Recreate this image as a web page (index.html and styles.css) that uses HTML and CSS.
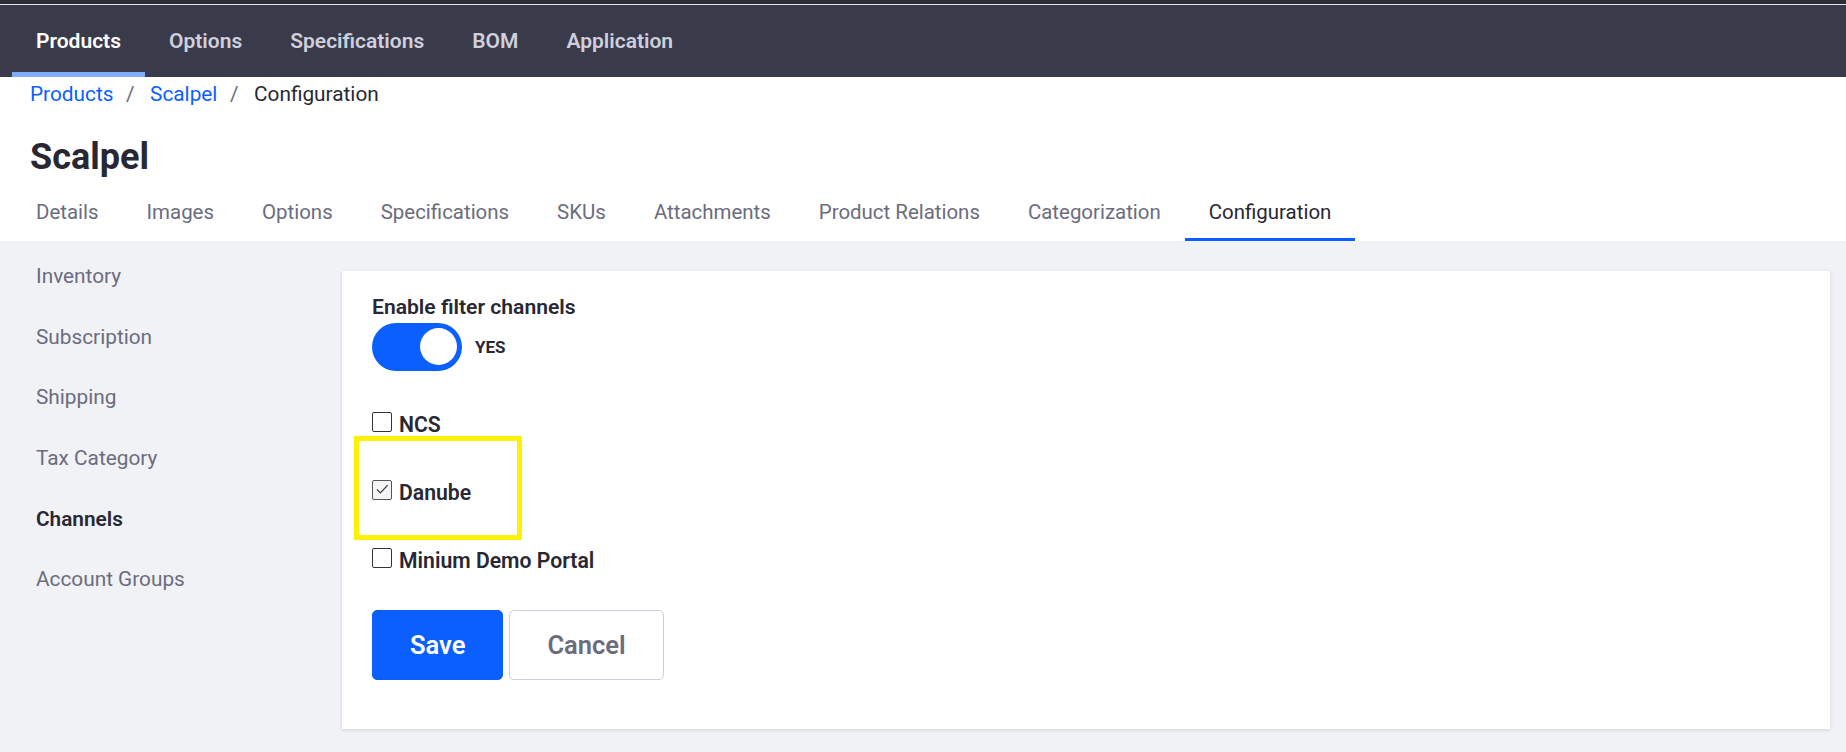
FILE: index.html
```html
<!DOCTYPE html>
<html lang="en">
<head>
<meta charset="utf-8">
<title>Scalpel - Configuration</title>
<link rel="stylesheet" href="styles.css">
</head>
<body>
<div class="topstrip"></div>
<nav class="appnav">
  <a class="appnav-item active">Products</a>
  <a class="appnav-item">Options</a>
  <a class="appnav-item">Specifications</a>
  <a class="appnav-item">BOM</a>
  <a class="appnav-item">Application</a>
</nav>
<header class="page-header">
  <ol class="breadcrumb">
    <li class="crumb-link">Products</li>
    <li class="crumb-sep">/</li>
    <li class="crumb-link">Scalpel</li>
    <li class="crumb-sep">/</li>
    <li class="crumb-current">Configuration</li>
  </ol>
  <h1 class="title">Scalpel</h1>
  <div class="tabs">
    <a class="tab">Details</a>
    <a class="tab">Images</a>
    <a class="tab">Options</a>
    <a class="tab">Specifications</a>
    <a class="tab">SKUs</a>
    <a class="tab">Attachments</a>
    <a class="tab">Product Relations</a>
    <a class="tab">Categorization</a>
    <a class="tab active">Configuration</a>
  </div>
</header>
<main class="content">
  <aside class="sidenav">
    <a class="side-item">Inventory</a>
    <a class="side-item">Subscription</a>
    <a class="side-item">Shipping</a>
    <a class="side-item">Tax Category</a>
    <a class="side-item active">Channels</a>
    <a class="side-item">Account Groups</a>
  </aside>
  <section class="card">
    <div class="field-label">Enable filter channels</div>
    <div class="toggle-row">
      <span class="toggle"><span class="knob"></span></span>
      <span class="toggle-text">YES</span>
    </div>
    <div class="check-row first">
      <span class="box"></span>
      <span class="check-label">NCS</span>
    </div>
    <div class="check-row">
      <span class="box checked"><svg viewBox="0 0 20 20" width="17" height="17"><polyline points="3.5,10 7.5,14 16,5" fill="none" stroke="#3a3a3a" stroke-width="1.3"/></svg></span>
      <span class="check-label">Danube</span>
    </div>
    <div class="check-row">
      <span class="box"></span>
      <span class="check-label">Minium Demo Portal</span>
    </div>
    <div class="actions">
      <button class="btn btn-primary">Save</button>
      <button class="btn btn-secondary">Cancel</button>
    </div>
    <div class="highlight"></div>
  </section>
</main>
</body>
</html>
```

FILE: styles.css
```css
* { box-sizing: border-box; margin: 0; padding: 0; }
body {
  margin: 0;
  width: 1846px;
  height: 752px;
  overflow: hidden;
  font-family: Roboto, "Noto Sans", sans-serif;
  background: #f1f2f5;
  color: #272833;
}
.topstrip { height: 5px; background: #2c2d38; border-bottom: 1px solid #e6e6ee; }
.appnav { display: flex; height: 72px; background: #393a4a; padding-left: 12px; }
.appnav-item {
  display: flex; align-items: center;
  padding: 5px 24px 0;
  border-bottom: 5px solid transparent;
  font-size: 21px; font-weight: 600;
  color: #cfd0db;
}
.appnav-item.active { color: #ffffff; border-bottom-color: #80acff; }

.page-header { background: #ffffff; }
.breadcrumb { display: flex; list-style: none; padding: 3px 30px 0; font-size: 20.8px; line-height: 28px; }
.crumb-link { color: #0b5fff; }
.crumb-sep { color: #6b6c7e; padding: 0 15.5px 0 12.5px; }
.crumb-current { color: #272833; }
.title { margin-top: 27px; padding-left: 30px; font-size: 36px; line-height: 44px; font-weight: 700; color: #272833; }
.tabs { display: flex; padding-left: 12px; }
.tab {
  padding: 19px 24px 12px;
  line-height: 28px; font-size: 20.45px;
  color: #6b6c7e;
  border-bottom: 3px solid transparent;
}
.tab.active { color: #272833; border-bottom-color: #0b5fff; }

.content {
  display: grid;
  grid-template-columns: 300px 1fr;
  column-gap: 29.5px;
  padding: 0 16px 0 12px;
  align-items: start;
}
.sidenav { display: flex; flex-direction: column; padding-top: 5px; }
.side-item { padding: 16.3px 24px; line-height: 28px; font-size: 20.8px; color: #6b6c7e; }
.side-item.active { color: #272833; font-weight: 600; }

.card {
  position: relative;
  margin-top: 30px;
  height: 458px;
  background: #ffffff;
  box-shadow: 0 1px 4px rgba(0, 0, 0, 0.13);
  padding: 22.5px 30.5px;
}
.field-label { font-size: 21.1px; line-height: 26px; font-weight: 600; color: #272833; }
.toggle-row { display: flex; align-items: center; gap: 13px; margin-top: 3px; }
.toggle {
  display: flex; align-items: center; justify-content: flex-end;
  width: 90px; height: 48px; border-radius: 24px;
  background: #0b5fff; padding-right: 5.5px;
}
.knob { width: 37px; height: 37px; border-radius: 50%; background: #ffffff; }
.toggle-text { font-size: 17px; font-weight: 700; color: #272833; }

.check-row { display: flex; align-items: flex-start; gap: 7px; margin-top: 39.9px; }
.check-row.first { margin-top: 40.3px; }
.box {
  display: flex; align-items: center; justify-content: center;
  width: 20px; height: 20px; margin-top: 1px;
  border: 1.5px solid #333333; border-radius: 2px; background: #ffffff;
}
.box.checked { border-color: #555555; background: #f4f4f4; }
.check-label { font-size: 21.2px; line-height: 28px; font-weight: 600; color: #272833; }

.actions { display: flex; gap: 6px; margin-top: 35px; }
.btn {
  height: 70.7px; padding: 0 37px;
  font-family: inherit; font-size: 25.5px; font-weight: 600;
  border-radius: 5px; border: 1px solid;
}
.btn-primary { background: #0b5fff; border-color: #0b5fff; color: #ffffff; }
.btn-secondary { background: #ffffff; border-color: #cdced9; color: #6b6c7e; }

.highlight {
  position: absolute;
  left: 12.5px; top: 165px;
  width: 168px; height: 104px;
  border: 5px solid #fff200;
}
```
